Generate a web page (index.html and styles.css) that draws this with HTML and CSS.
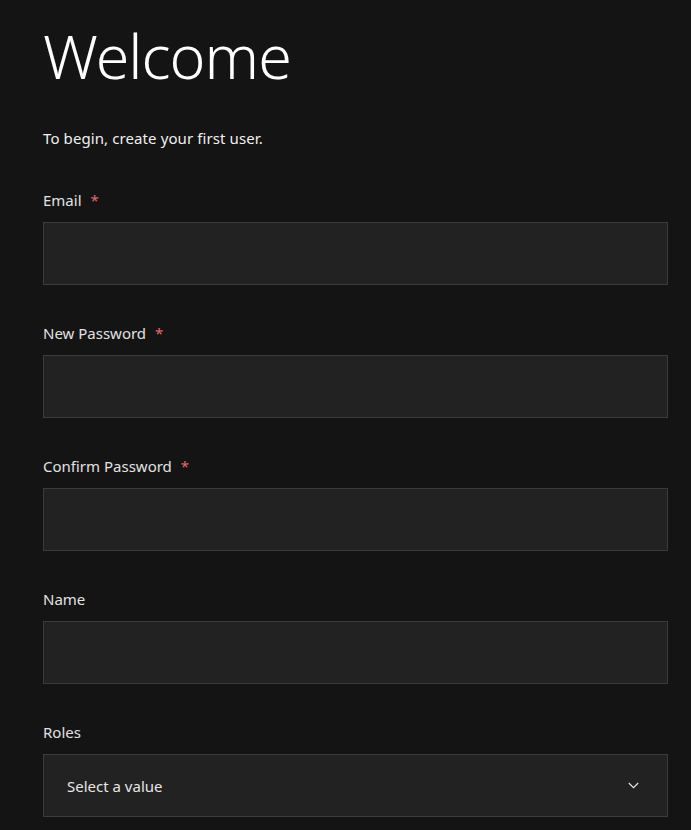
FILE: index.html
```html
<!DOCTYPE html>
<html lang="en">
<head>
<meta charset="utf-8">
<title>Welcome</title>
<link rel="stylesheet" href="styles.css">
</head>
<body>
<main class="page">
  <h1 class="title">Welcome</h1>
  <p class="intro">To begin, create your first user.</p>
  <form class="form">
    <div class="field">
      <label class="label">Email <span class="req">*</span></label>
      <div class="input"></div>
    </div>
    <div class="field">
      <label class="label">New Password <span class="req">*</span></label>
      <div class="input"></div>
    </div>
    <div class="field">
      <label class="label">Confirm Password <span class="req">*</span></label>
      <div class="input"></div>
    </div>
    <div class="field">
      <label class="label">Name</label>
      <div class="input"></div>
    </div>
    <div class="field">
      <label class="label">Roles</label>
      <div class="input select">
        <span class="placeholder">Select a value</span>
        <svg class="chev" width="11" height="7" viewBox="0 0 11 7"><path d="M0.8 1 L5.5 5.7 L10.2 1" fill="none" stroke="#e6e6e6" stroke-width="1.2"/></svg>
      </div>
    </div>
  </form>
</main>
</body>
</html>
```
FILE: styles.css
```css
html, body {
  margin: 0;
  padding: 0;
  background: #141414;
  color: #f2f2f2;
  font-family: "Noto Sans", "Open Sans", sans-serif;
}
.page {
  padding: 16px 23px 0 43px;
}
.title {
  margin: 0;
  font-size: 61px;
  font-weight: 300;
  line-height: 80px;
  color: #ffffff;
  letter-spacing: -1px;
}
.intro {
  margin: 32px 0 0;
  font-size: 15px;
  line-height: 20px;
  color: #f0f0f0;
  letter-spacing: 0.1px;
}
.form {
  display: flex;
  flex-direction: column;
  gap: 38px;
  margin-top: 42px;
}
.field {
  display: flex;
  flex-direction: column;
  gap: 12px;
}
.label {
  font-size: 15px;
  line-height: 20px;
  color: #e2e2e2;
}
.req {
  color: #e5676c;
  margin-left: 5px;
}
.input {
  height: 61px;
  background: #222222;
  border: 1px solid #3b3b3b;
  box-sizing: content-box;
}
.select {
  display: flex;
  align-items: center;
  justify-content: space-between;
  padding: 0 28px 0 23px;
}
.placeholder {
  font-size: 15px;
  color: #e6e6e6;
}
```
